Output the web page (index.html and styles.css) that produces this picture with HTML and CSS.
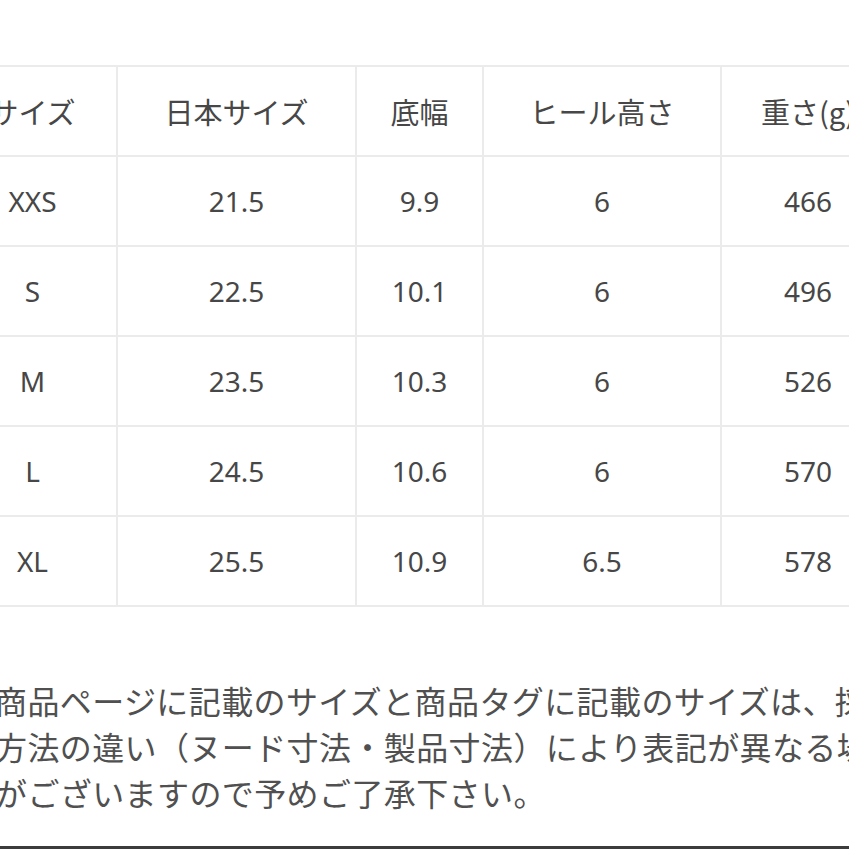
FILE: index.html
```html
<!DOCTYPE html>
<html lang="ja">
<head>
<meta charset="utf-8">
<link rel="stylesheet" href="styles.css">
</head>
<body>
<div class="page">
  <table class="size-table">
    <colgroup>
      <col class="c1"><col class="c2"><col class="c3"><col class="c4"><col class="c5">
    </colgroup>
    <thead>
      <tr><th>サイズ</th><th>日本サイズ</th><th>底幅</th><th>ヒール高さ</th><th>重さ(g)</th></tr>
    </thead>
    <tbody>
      <tr><td>XXS</td><td>21.5</td><td>9.9</td><td>6</td><td>466</td></tr>
      <tr><td>S</td><td>22.5</td><td>10.1</td><td>6</td><td>496</td></tr>
      <tr><td>M</td><td>23.5</td><td>10.3</td><td>6</td><td>526</td></tr>
      <tr><td>L</td><td>24.5</td><td>10.6</td><td>6</td><td>570</td></tr>
      <tr><td>XL</td><td>25.5</td><td>10.9</td><td>6.5</td><td>578</td></tr>
    </tbody>
  </table>
  <p class="note">商品ページに記載のサイズと商品タグに記載のサイズは、採寸<br>方法の違い（ヌード寸法・製品寸法）により表記が異なる場合<br>がございますので予めご了承下さい。</p>
</div>
<div class="bottom-bar"></div>
</body>
</html>
```
FILE: styles.css
```css
html, body {
  margin: 0;
  padding: 0;
  background: #ffffff;
}
body {
  width: 849px;
  height: 849px;
  overflow: hidden;
  position: relative;
  font-family: "Noto Sans", "Noto Sans CJK JP", sans-serif;
  color: #474747;
}
.page {
  padding-top: 65px;
}
.size-table {
  margin-left: -53px;
  border-collapse: collapse;
  table-layout: fixed;
  width: 947px;
}
.c1 { width: 169px; }
.c2 { width: 239px; }
.c3 { width: 127px; }
.c4 { width: 238px; }
.c5 { width: 174px; }
.size-table th,
.size-table td {
  border: 2px solid #ebebeb;
  height: 88px;
  padding: 0;
  text-align: center;
  vertical-align: middle;
  font-size: 28px;
  font-weight: 400;
  white-space: nowrap;
  overflow: hidden;
}
.size-table th {
  font-family: "Noto Sans CJK JP", "Noto Sans", sans-serif;
  font-size: 29px;
}
.note {
  margin: 70px 0 0 -5px;
  width: 900px;
  font-family: "Noto Sans CJK JP", sans-serif;
  font-size: 32px;
  letter-spacing: 0.4px;
  line-height: 46px;
  color: #505050;
  white-space: nowrap;
}
.bottom-bar {
  position: absolute;
  left: 0;
  right: 0;
  bottom: 0;
  height: 3px;
  background: #3c3c3c;
}
```
